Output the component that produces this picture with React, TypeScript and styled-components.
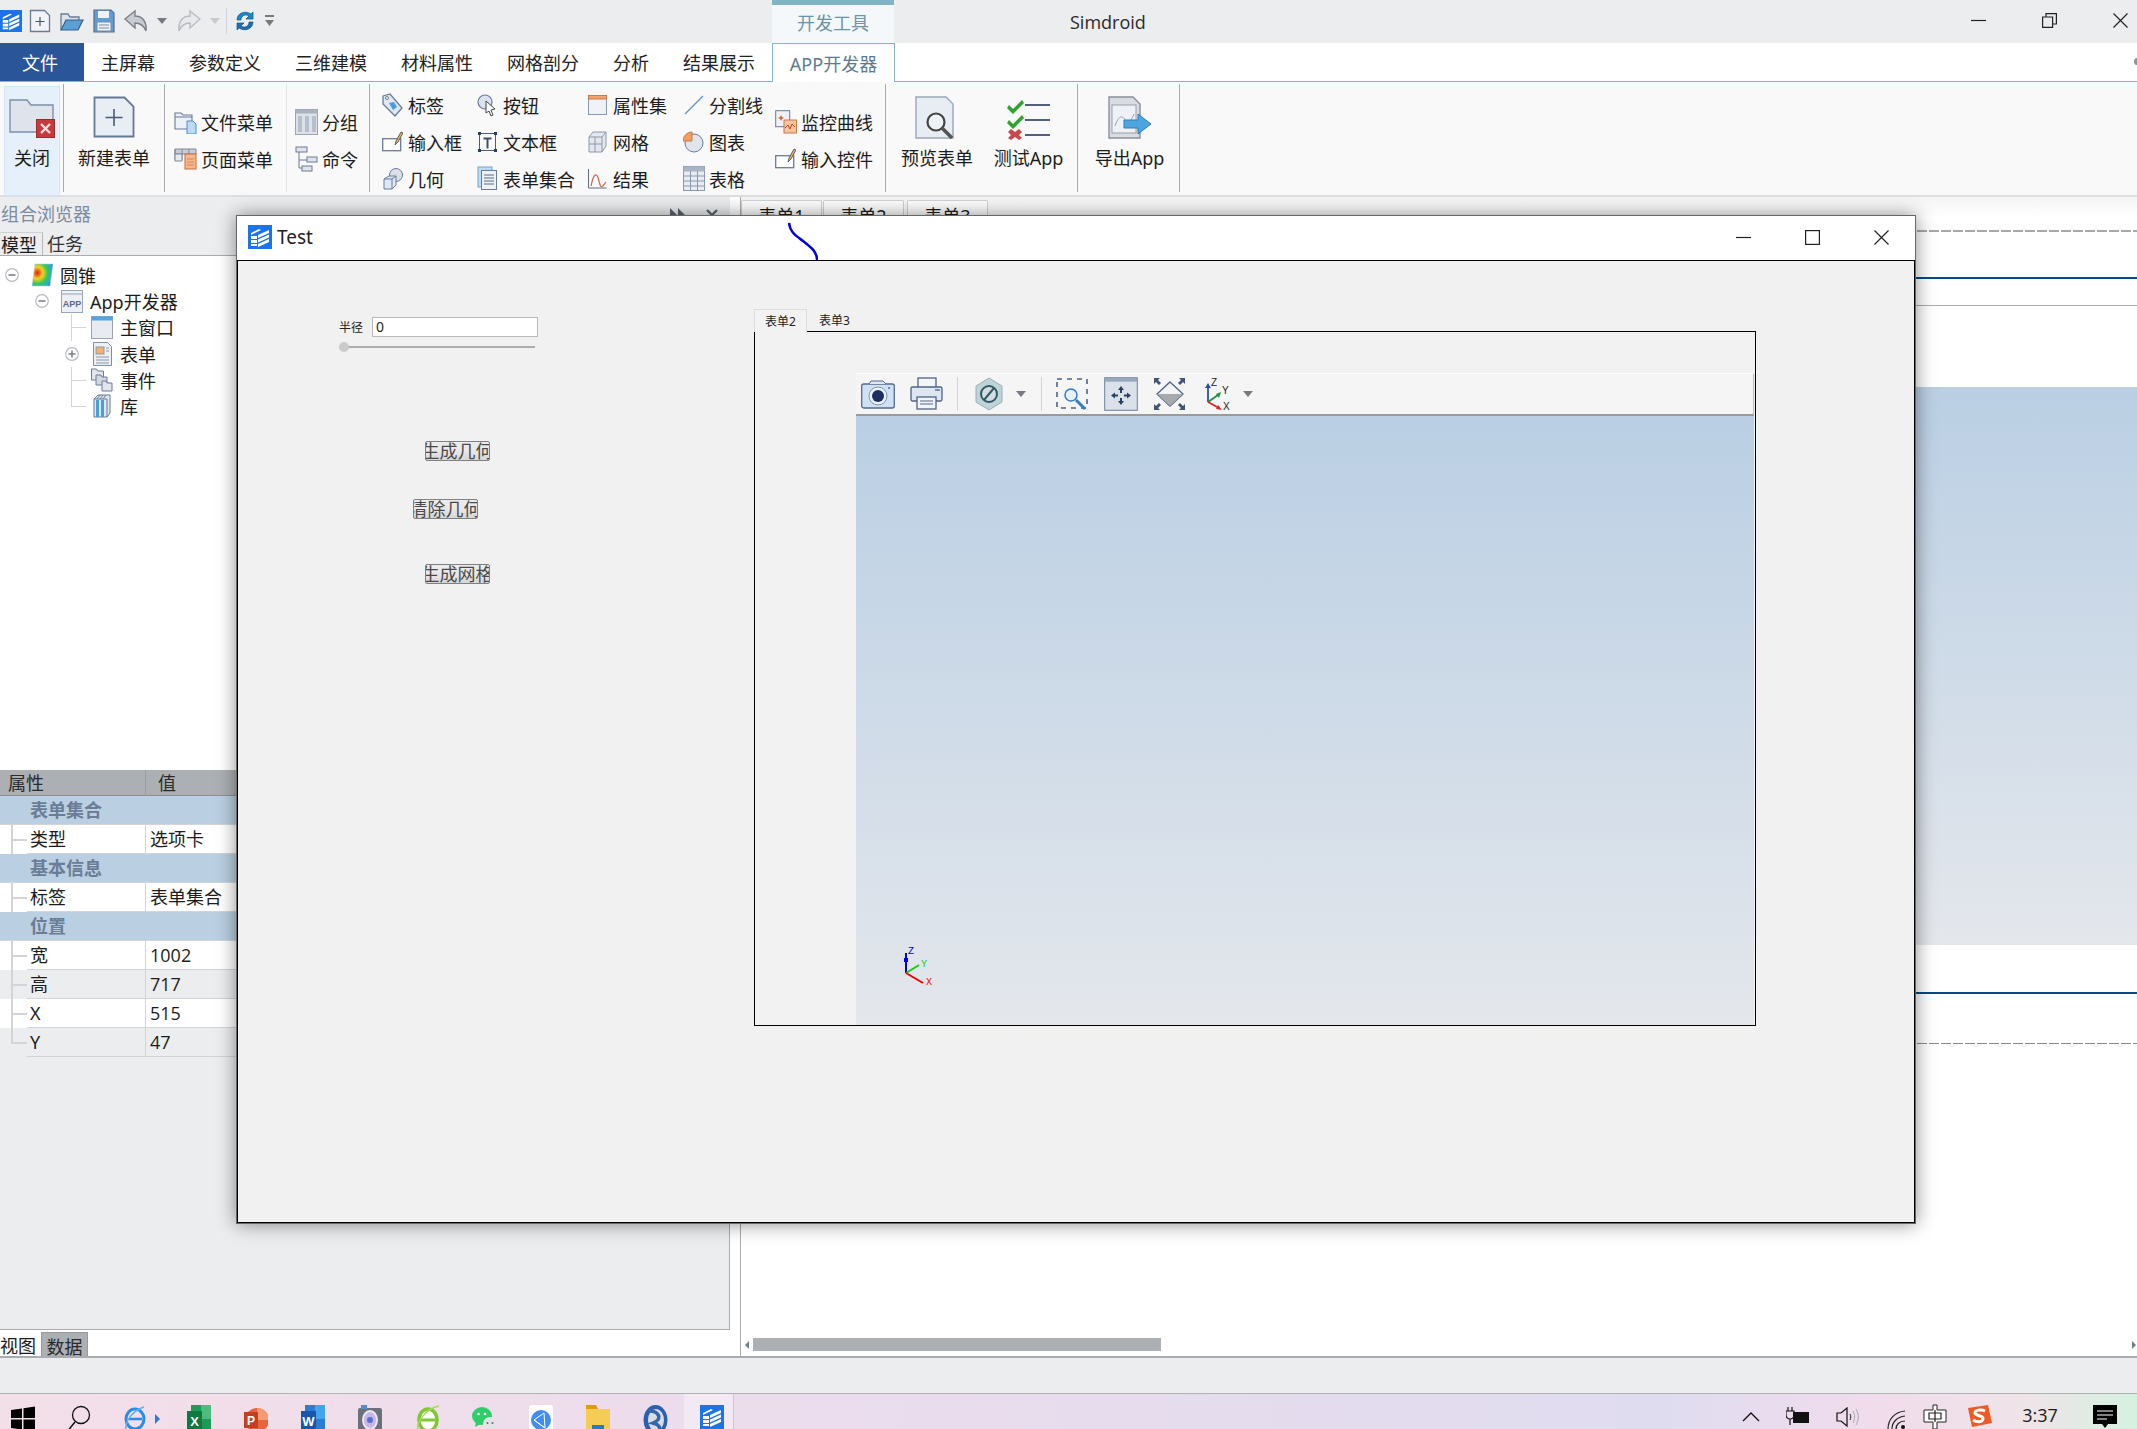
import React from "react";
import styled, { createGlobalStyle } from "styled-components";

const Global = createGlobalStyle`
  html, body { margin: 0; padding: 0; background: #fff; overflow: hidden; }
  body { font-family: "Noto Sans", "Noto Sans CJK SC", sans-serif; color: #1c1c1c; }
  * { box-sizing: border-box; }
`;

const Page = styled.div`
  position: relative; width: 2137px; height: 1429px; overflow: hidden;
  display: flex; flex-direction: column; background: #fff;
`;

/* ---------- icons ---------- */
const S = ({ w, h = w, vb, children }: { w: number; h?: number; vb?: string; children: React.ReactNode }) => (
  <svg width={w} height={h} viewBox={vb || `0 0 ${w} ${h}`} style={{ display: "block", flex: "none" }}>{children}</svg>
);
const ink = "#6a7b96";

const Logo = ({ s = 24 }: { s?: number }) => (
  <S w={s} vb="0 0 24 24">
    <rect width="24" height="24" fill="#1b74e8" />
    <g fill="#fff">
      <path d="M3 8l8-4 2 1-10 5zM3 11h6v3H3zM3 15h6v3H3zM3 19h6v2H3z" />
      <path d="M10 10l11-5v3l-11 5zM10 14.5l11-5v3l-11 5zM10 19l11-5v3l-11 5z" />
    </g>
  </S>
);
const DocPlus = () => (
  <S w={22} h={24}>
    <path d="M1.5 1.5h14l5 5v16h-19z" fill="#f0f3f8" stroke={ink} strokeWidth="1.3" />
    <path d="M11 8v9M6.5 12.5h9" stroke="#46536b" strokeWidth="1.2" />
  </S>
);
const OpenFolder = () => (
  <S w={25} h={24}>
    <path d="M2 21V5h7l2 3h9v4" fill="#dbe3ee" stroke={ink} strokeWidth="1.3" />
    <path d="M2 21l5-10h17l-5 10z" fill="#5c9fd4" stroke="#35608c" strokeWidth="1.2" />
  </S>
);
const Save = () => (
  <S w={22} h={24}>
    <path d="M1 1h17l3 3v19H1z" fill="#5f9fd6" stroke="#5a6d8a" strokeWidth="1.2" />
    <rect x="5" y="2" width="11" height="7" fill="#eef3f9" />
    <rect x="4" y="13" width="14" height="9" fill="#eef1f6" stroke="#7a8aa3" />
    <path d="M6 16h10M6 19h10" stroke="#7a8aa3" />
  </S>
);
const Undo = ({ faded, flip }: { faded?: boolean; flip?: boolean }) => (
  <S w={24} h={24}>
    <path
      d="M1 10L11 2v5c7 0 12 5 11 15-2-5-5-8-11-8v5z"
      fill={faded ? "#e8e9ec" : "#c8ccd2"} stroke={faded ? "#b8bcc2" : "#7b8087"} strokeWidth="1.4"
      transform={flip ? "matrix(-1 0 0 1 24 0)" : undefined}
    />
  </S>
);
const Caret = ({ c = "#767a80", w = 10, h = 6 }: { c?: string; w?: number; h?: number }) => (
  <S w={w} h={h}><path d={`M0 0h${w}L${w / 2} ${h}z`} fill={c} /></S>
);
const Refresh = () => (
  <S w={20} h={24}>
    <path d="M2 11C2 4 10 1 16 5l2-2v7h-7l3-3c-3-2-8-1-8 4z" fill="#1d88c9" stroke="#13587e" strokeWidth=".7" />
    <path d="M18 13c0 7-8 10-14 6l-2 2v-7h7l-3 3c3 2 8 1 8-4z" fill="#1d6fb5" stroke="#13587e" strokeWidth=".7" />
  </S>
);
const SmallDrop = () => (
  <S w={9} h={12}><path d="M0 0h9v2H0zM0 5h9L4.5 11z" fill="#76797e" /></S>
);
const WinMin = () => <S w={15}><path d="M0 7.5h15" stroke="#222" strokeWidth="1.2" /></S>;
const WinRestore = () => (
  <S w={15}><path d="M.6 4h10v10.4H.6zM4 4V.6h10.4V11H11" fill="none" stroke="#222" strokeWidth="1.2" /></S>
);
const WinClose = () => <S w={15}><path d="M.5.5l14 14M14.5.5l-14 14" stroke="#222" strokeWidth="1.2" /></S>;
const DlgMax = () => <S w={15}><rect x=".6" y=".6" width="13.8" height="13.8" fill="none" stroke="#222" strokeWidth="1.2" /></S>;
const PinArrows = () => <S w={16} h={14}><path d="M0 0l7 7-7 7zM8 0l7 7-7 7z" fill="#5c6470" /></S>;
const PanelX = () => <S w={14}><path d="M2 2l10 10M12 2L2 12" stroke="#5c6470" strokeWidth="2.4" /></S>;

const CloseFolder = () => (
  <S w={46} h={42}>
    <path d="M1 4h17l4 5h22v27H1z" fill="#dfe4ec" stroke="#7e8ea6" strokeWidth="1.4" />
    <rect x="27.5" y="23.5" width="18" height="18" fill="#c53a3d" stroke="#9a2b2e" />
    <path d="M32 28l9 9M41 28l-9 9" stroke="#f6dede" strokeWidth="2.4" />
  </S>
);
const NewForm = () => (
  <S w={42} h={42}>
    <path d="M1.5 1.5h30l9 9v30h-39z" fill="#e9edf4" stroke="#66789a" strokeWidth="1.8" />
    <path d="M21 13v17M12.5 21.5h17" stroke="#495a78" strokeWidth="1.6" />
  </S>
);
const PreviewForm = () => (
  <S w={44} h={44} >
    <path d="M1 1h30l7 7v34H1z" fill="#e8ecf3" stroke="#9aa6b8" strokeWidth="1.4" />
    <circle cx="21" cy="26" r="8.5" fill="#eef2f6" stroke="#444" strokeWidth="2.2" />
    <path d="M27 32l10 10" stroke="#555" strokeWidth="3.6" />
  </S>
);
const CheckList = () => (
  <S w={44} h={44}>
    <path d="M2 9l4 4 9-9 2 3-11 11L0 12z" fill="#2ea32e" />
    <path d="M2 24l4 4 9-9 2 3-11 11-6-6z" fill="#2ea32e" />
    <path d="M4 33l4 3 4-3 3 3-3 3 3 3-3 2-4-3-4 3-3-2 3-3-3-3z" fill="#c84a4a" />
    <path d="M18 9h25M18 24h25M18 39h25" stroke="#4e607e" strokeWidth="2" />
  </S>
);
const ExportApp = () => (
  <S w={44} h={44}>
    <path d="M1 1h24l7 7v34H1z" fill="#d9dde3" stroke="#8b8f96" strokeWidth="1.4" />
    <rect x="4" y="9" width="24" height="28" fill="#eef1f5" stroke="#9aa0aa" />
    <path d="M7 30c4-12 8-10 10-6s6 2 9-6" stroke="#9aa3b2" fill="none" />
    <path d="M16 24h14v-6l13 10-13 10v-6H16z" fill="#4ea4dd" stroke="#2f7fb6" />
  </S>
);

const Tag = () => (
  <S w={21} h={24}>
    <path d="M1 3l7-2 12 14-7 8L1 11z" fill="#dfe7f1" stroke={ink} strokeWidth="1.3" />
    <path d="M7 10l5-1 3 5-4 3z" fill="#4d9bdb" />
    <circle cx="5" cy="5" r="1.5" fill="#fff" stroke={ink} />
  </S>
);
const ButtonIc = () => (
  <S w={21} h={24}>
    <circle cx="8" cy="9" r="7" fill="#d9e2ee" stroke={ink} strokeWidth="1.2" />
    <path d="M9 8l9 8-4 1 2 5-2 1-2-5-3 2z" fill="#fff" stroke="#444" />
  </S>
);
const InputIc = () => (
  <S w={21} h={24}>
    <rect x=".7" y="8.7" width="18" height="12" fill="#fff" stroke={ink} strokeWidth="1.3" />
    <path d="M13 15l1-4 5-9 2 1-5 9z" fill="#f2a64b" stroke="#4b5a70" strokeWidth=".9" />
  </S>
);
const TextBox = () => (
  <S w={21} h={24}>
    <rect x="2.5" y="3.5" width="16" height="17" fill="none" stroke="#4a5d80" />
    <path d="M1 2h3v3H1zM17 2h3v3h-3zM1 19h3v3H1zM17 19h3v3h-3z" fill="#2c3e5e" />
    <path d="M6.5 7.5h8v2h-3v9h-2v-9h-3z" fill="#3e4f6b" />
  </S>
);
const Geometry = () => (
  <S w={21} h={24}>
    <circle cx="14" cy="8" r="6.5" fill="#dadfe8" stroke={ink} />
    <path d="M2 12l5-3h7v9l-4 4H2z" fill="#dce9f6" stroke={ink} />
    <path d="M2 12h8v10M10 12l4-3" fill="none" stroke={ink} />
  </S>
);
const FileMenu = () => (
  <S w={23} h={24}>
    <path d="M1 3h6l2 2h9v14H1z" fill="#eef1f6" stroke={ink} strokeWidth="1.1" />
    <path d="M1 7h17" stroke={ink} />
    <path d="M13 11h6l3 3v10h-9z" fill="#bcdcf5" stroke="#4c8fc5" />
  </S>
);
const PageMenu = () => (
  <S w={23} h={24}>
    <path d="M1 2h21v5H1z" fill="#c9ced7" stroke="#7e8795" />
    <path d="M8 2v11H1V2M15 2v5" fill="none" stroke="#7e8795" />
    <path d="M1 7h7v7H1z" fill="#e6e9ee" stroke="#7e8795" />
    <rect x="11" y="7" width="11" height="15" fill="#f7b98c" stroke="#c96a3c" />
    <path d="M13 12h7M13 15h7M13 18h7" stroke="#d88658" />
  </S>
);
const GroupIc = () => (
  <S w={23} h={26}>
    <rect x=".5" y=".5" width="22" height="25" fill="#dde1e8" stroke="#98a2b2" />
    <rect x=".5" y=".5" width="22" height="4" fill="#a9b2c0" />
    <path d="M3 7h4v16H3zM10 7h4v16h-4zM17 7h4v16h-4z" fill="#b7bfcc" />
  </S>
);
const CommandIc = () => (
  <S w={23} h={26}>
    <path d="M4 6v16h8M4 14h8" fill="none" stroke={ink} />
    <rect x="1" y="1" width="11" height="5" fill="#dfe4ec" stroke={ink} />
    <rect x="12" y="11" width="10" height="5" fill="#dfe4ec" stroke={ink} />
    <rect x="7" y="20" width="10" height="5" fill="#dfe4ec" stroke={ink} />
  </S>
);
const FormSet = () => (
  <S w={21} h={25}>
    <rect x="1" y="1" width="14" height="20" fill="#bcdcf5" stroke="#6ea6d6" />
    <rect x="4.5" y="4.5" width="15" height="19" fill="#eef1f6" stroke={ink} />
    <path d="M7 9h10M7 12h10M7 15h10M7 18h10" stroke="#5c6c85" />
  </S>
);
const PropSet = () => (
  <S w={21} h={24}>
    <rect x="1.5" y="2.5" width="18" height="19" fill="#eff2f6" stroke="#8a98ad" />
    <rect x="1.5" y="2.5" width="18" height="3.5" fill="#f4a468" stroke="#c9794a" />
  </S>
);
const MeshIc = () => (
  <S w={21} h={24}>
    <path d="M2 7l4-5h13v14l-4 6H2z" fill="#e4e8ee" stroke="#8a98ad" />
    <path d="M2 7h13v15M15 7l4-5M2 14h13M8 7v15" fill="none" stroke="#8a98ad" />
  </S>
);
const ResultIc = () => (
  <S w={21} h={24}>
    <path d="M1.5 2v19h18" fill="none" stroke="#5c6c85" />
    <path d="M4 19c3-14 6-14 8-5s3 6 7 1" fill="none" stroke="#d0654a" strokeWidth="1.2" />
  </S>
);
const LineIc = () => <S w={21} h={24}><path d="M2 21L20 3" stroke="#5b93c8" strokeWidth="1.3" /></S>;
const PieIc = () => (
  <S w={21} h={24}>
    <circle cx="11" cy="13" r="9" fill="#dfe5ee" stroke={ink} />
    <path d="M9 2v9H0C0 6 4 2 9 2z" fill="#f2a062" stroke="#c9794a" />
  </S>
);
const TableIc = () => (
  <S w={22} h={25}>
    <rect x=".5" y=".5" width="21" height="24" fill="#e9edf3" stroke="#8a98ad" />
    <rect x=".5" y=".5" width="21" height="5" fill="#a9b4c4" />
    <path d="M1 10h20M1 15h20M1 20h20M7.5 5v19M14.5 5v19" stroke="#8a98ad" />
  </S>
);
const MonitorIc = () => (
  <S w={22} h={24}>
    <rect x=".7" y=".7" width="14" height="16" fill="#eef1f6" stroke={ink} />
    <path d="M6 5l1 2 2 1-2 1-1 2-1-2-2-1 2-1z" fill="#d06a3c" />
    <rect x="9" y="10" width="12.5" height="13" fill="#f8c59b" stroke="#c9794a" />
    <path d="M10 18l3-3 2 4 2-5 3 3" fill="none" stroke="#c0442a" />
  </S>
);

const ToggleCircle = ({ open }: { open: boolean }) => (
  <S w={14}>
    <circle cx="7" cy="7" r="6.3" fill="#fff" stroke="#b7babf" strokeWidth="1.2" />
    <path d={open ? "M3.5 7h7" : "M3.5 7h7M7 3.5v7"} stroke="#7d8288" strokeWidth="1.6" />
  </S>
);
const ConeIc = () => (
  <S w={22} h={24}>
    <defs>
      <radialGradient id="cone" cx=".25" cy=".4" r=".9">
        <stop offset="0" stopColor="#e21b1b" />
        <stop offset=".3" stopColor="#f6d21c" />
        <stop offset=".55" stopColor="#34c75a" />
        <stop offset=".8" stopColor="#25a8e0" />
        <stop offset="1" stopColor="#2350c8" />
      </radialGradient>
    </defs>
    <path d="M4 1h18l-3 22H1z" fill="url(#cone)" stroke="#c6cad0" strokeWidth=".6" />
  </S>
);
const AppIc = () => (
  <S w={22} h={23}>
    <rect x=".5" y=".5" width="21" height="22" fill="#eceff4" stroke="#9aa6b8" />
    <path d="M1 4h20" stroke="#9aa6b8" />
    <text x="11" y="17" textAnchor="middle" fontSize="9" fontWeight="700" fill="#5b6b85" fontFamily="Liberation Sans, sans-serif">APP</text>
  </S>
);
const WindowIc = () => (
  <S w={22} h={23}>
    <rect x=".5" y=".5" width="21" height="22" fill="#e8ebf1" stroke="#98a4b6" />
    <rect x=".5" y=".5" width="21" height="4" fill="#51a6e0" />
  </S>
);
const FormIc = () => (
  <S w={19} h={24}>
    <path d="M.5.5h14l4 4v19H.5z" fill="#edf0f5" stroke="#7f8fa8" />
    <rect x="3" y="5" width="8" height="7" fill="#f5b274" stroke="#8d97a8" />
    <path d="M13 6h3M13 9h3M3 15h13M3 18h13M3 21h13" stroke="#8a96a8" />
  </S>
);
const EventIc = () => (
  <S w={22} h={24}>
    <path d="M.5 1h5l1 2h6v9H.5z" fill="#e3e6ec" stroke={ink} />
    <path d="M5 7h5l1 2h5v8H5z" fill="#d3d8e0" stroke={ink} />
    <path d="M11 13h4l1 2h5v8H11z" fill="#e3e6ec" stroke={ink} />
  </S>
);
const LibraryIc = () => (
  <S w={18} h={24}>
    <path d="M1 5l4-4h12v18l-3 4H1z" fill="#dfe8f2" stroke={ink} />
    <path d="M1 5h13v18" fill="none" stroke={ink} />
    <path d="M3 6h3v17H3zM8 6h3v17H8z" fill="#4ba0dc" />
    <path d="M7 1L4 5M10 1L7 5M13 1l-3 4" stroke={ink} />
  </S>
);

const Camera = () => (
  <S w={34} h={32}>
    <rect x=".7" y="6" width="32.6" height="24" rx="2" fill="#cfe1f4" stroke="#55698c" strokeWidth="1.3" />
    <path d="M8 6l2-3h12l3 3" fill="#dfe7f2" stroke="#55698c" />
    <circle cx="17" cy="18" r="9" fill="#eaf1f9" stroke="#7f95b5" />
    <circle cx="17" cy="18" r="6" fill="#1c2f62" />
    <circle cx="28" cy="10" r="1" fill="#55698c" />
  </S>
);
const Printer = () => (
  <S w={33} h={34}>
    <rect x="8" y="1" width="18" height="11" fill="#f2f5f9" stroke="#4f6384" strokeWidth="1.3" />
    <rect x="1" y="10" width="31" height="14" rx="1.5" fill="#dde6f1" stroke="#4f6384" strokeWidth="1.3" />
    <path d="M25 13h5" stroke="#7f8ea6" strokeWidth="2" />
    <rect x="7" y="20" width="19" height="12" fill="#f2f5f9" stroke="#4f6384" strokeWidth="1.3" />
    <path d="M10 24h13M10 27h13" stroke="#55698c" strokeWidth="1.2" />
  </S>
);
const Hexagon = () => (
  <S w={28} h={34}>
    <path d="M14 1l13 8v16l-13 8-13-8V9z" fill="#bfd4d9" stroke="#9ab0b8" />
    <circle cx="14" cy="17" r="8" fill="#d5dde2" stroke="#2f5a68" strokeWidth="2" />
    <path d="M9 23l10-12" stroke="#2f5a68" strokeWidth="2" />
  </S>
);
const ZoomBox = () => (
  <S w={33} h={34}>
    <rect x="1" y="2" width="30" height="29" fill="none" stroke="#4f6384" strokeWidth="1.6" strokeDasharray="5 5" />
    <circle cx="15" cy="18" r="6" fill="#e9f1f8" stroke="#2f7fc1" strokeWidth="1.5" />
    <path d="M20 23l9 9" stroke="#2f7fc1" strokeWidth="3" />
  </S>
);
const PanIc = () => (
  <S w={34} h={34}>
    <rect x=".7" y=".7" width="32.6" height="32.6" fill="#dbe1ea" stroke="#6d7f9c" />
    <rect x=".7" y=".7" width="32.6" height="4" fill="#9aa8bd" />
    <path d="M17 9l3 4h-2v3h-2v-3h-2zM17 28l3-4h-2v-3h-2v3h-2zM7 18.5l4-3v2h3v2h-3v2zM27 18.5l-4-3v2h-3v2h3v2z" fill="#2c3e5e" />
  </S>
);
const FitIc = () => (
  <S w={33} h={34}>
    <path d="M17 5L30 17 17 29 4 17z" fill="#f2f3f5" stroke="#4f6384" strokeWidth="1.3" />
    <path d="M4 17h26L17 29z" fill="#a6a9ae" />
    <path d="M1 1h6L5 3l3 3-2 2-3-3-2 2zM32 1h-6l2 2-3 3 2 2 3-3 2 2zM1 33h6l-2-2 3-3-2-2-3 3-2-2zM32 33h-6l2-2-3-3 2-2 3 3 2-2z" fill="#40547a" />
  </S>
);
const AxesIc = () => (
  <S w={38} h={34}>
    <path d="M4 25V9" stroke="#2552a8" strokeWidth="1.8" />
    <path d="M4 6l3 5H1z" fill="#2552a8" />
    <path d="M4 25l10-7" stroke="#1f8f44" strokeWidth="1.8" />
    <path d="M17 15l-2 6-3-4z" fill="#1f8f44" />
    <path d="M4 25l11 6" stroke="#d9262a" strokeWidth="1.8" />
    <path d="M18 33l-6-1 2-4z" fill="#d9262a" />
    <g fontFamily="Liberation Sans, sans-serif" fontSize="10" fill="#222">
      <text x="7" y="9">Z</text><text x="18" y="17">Y</text><text x="19" y="33">X</text>
    </g>
  </S>
);

const Windows = () => (
  <S w={24} h={28}>
    <path d="M0 5l11-1.5V13H0zM12.5 3.3L24 1.5V13H12.5zM0 14.5h11v10L0 23zM12.5 14.5H24V27l-11.5-2z" fill="#000" />
  </S>
);
const SearchIc = () => (
  <S w={26} h={28}>
    <circle cx="16" cy="10" r="8.5" fill="none" stroke="#111" strokeWidth="1.3" />
    <path d="M10 17L1 28" stroke="#111" strokeWidth="1.5" />
  </S>
);
const IeIc = () => (
  <S w={40} h={28}>
    <ellipse cx="15" cy="14" rx="9" ry="10" fill="none" stroke="#2a8be8" strokeWidth="3" />
    <path d="M9 14h13" stroke="#2a8be8" strokeWidth="2.5" />
    <path d="M6 26C4 16 14 5 24 2" fill="none" stroke="#5fb0f0" strokeWidth="1.5" />
    <path d="M35 9l5 5-5 5z" fill="#2a78e0" />
  </S>
);
const Office = ({ c1, c2, c3, l }: { c1: string; c2: string; c3: string; l: string }) => (
  <S w={24} h={30}>
    <rect x="4" y="0" width="20" height="28" fill={c2} />
    <rect x="14" y="0" width="10" height="14" fill={c3} />
    <rect x="0" y="6" width="15" height="20" fill={c1} />
    <text x="7.5" y="21" textAnchor="middle" fontSize="13" fontWeight="700" fill="#fff" fontFamily="Liberation Sans, sans-serif">{l}</text>
  </S>
);
const PptIc = () => (
  <S w={24} h={30}>
    <circle cx="13" cy="15" r="12" fill="#e8653c" />
    <path d="M13 3a12 12 0 0 1 12 12H13z" fill="#f59a73" />
    <rect x="0" y="7" width="14" height="16" fill="#c2401f" />
    <text x="7" y="20" textAnchor="middle" fontSize="12" fontWeight="700" fill="#fff" fontFamily="Liberation Sans, sans-serif">P</text>
  </S>
);
const CamTask = () => (
  <S w={24} h={30}>
    <rect x="0" y="3" width="24" height="25" rx="2" fill="#6c7078" />
    <rect x="3" y="0" width="6" height="4" fill="#4e8fd0" />
    <ellipse cx="12" cy="15" rx="7" ry="9" fill="#c8b5e8" stroke="#e8e8f0" strokeWidth="2" />
    <circle cx="12" cy="15" r="3" fill="#5a6fd0" />
  </S>
);
const GreenIe = () => (
  <S w={25} h={30}>
    <ellipse cx="13" cy="15" rx="9" ry="11" fill="#fff" stroke="#7fc832" strokeWidth="3.5" />
    <path d="M6 15h14" stroke="#7fc832" strokeWidth="3" />
    <path d="M3 28C0 17 12 3 24 1" fill="none" stroke="#a3d95f" strokeWidth="1.5" />
  </S>
);
const WeChat = () => (
  <S w={25} h={28}>
    <ellipse cx="10" cy="11" rx="10" ry="9" fill="#2ecf6a" />
    <path d="M4 17l-1 5 6-3z" fill="#2ecf6a" />
    <circle cx="6.5" cy="9" r="1.3" fill="#fff" /><circle cx="13" cy="9" r="1.3" fill="#fff" />
    <ellipse cx="18" cy="19" rx="7" ry="7" fill="#e4e4e6" />
    <circle cx="15.5" cy="18" r="1" fill="#666" /><circle cx="20.5" cy="18" r="1" fill="#666" />
  </S>
);
const BlueNet = () => (
  <S w={24} h={30}>
    <rect x="0" y="0" width="24" height="30" rx="3" fill="#fff" />
    <circle cx="12" cy="15" r="10" fill="#3f8ef0" />
    <path d="M5 15l10-7 1 15zM5 15l11 8" fill="none" stroke="#fff" />
  </S>
);
const FolderTask = () => (
  <S w={24} h={30}>
    <path d="M0 0h10l2 4H0z" fill="#e09a14" />
    <rect x="0" y="4" width="24" height="24" fill="#f5cd55" />
    <rect x="6" y="20" width="12" height="10" fill="#2a78c8" />
    <rect x="10" y="24" width="4" height="6" fill="#f5cd55" />
  </S>
);
const Swirl = () => (
  <S w={25} h={32}>
    <ellipse cx="12.5" cy="15" rx="12" ry="15" fill="#2c5fb0" />
    <ellipse cx="13" cy="15" rx="8" ry="11" fill="#d8dce4" />
    <path d="M6 6c10 0 14 8 4 12 8 2 9 8 4 12" fill="none" stroke="#36a" strokeWidth="3.5" />
  </S>
);
const Chevron = () => <S w={18} h={10}><path d="M1 9l8-8 8 8" fill="none" stroke="#111" strokeWidth="1.3" /></S>;
const Battery = () => (
  <S w={24} h={20}>
    <path d="M2 0v4M6 0v4M0 4h8v4a4 4 0 0 1-8 0zM4 12v6" fill="none" stroke="#111" strokeWidth="1.2" />
    <rect x="7" y="5" width="16" height="11" fill="#111" />
  </S>
);
const Speaker = () => (
  <S w={23} h={20}>
    <path d="M1 6h4l6-5v18l-6-5H1z" fill="none" stroke="#111" strokeWidth="1.2" />
    <path d="M14 7c1 2 1 4 0 6" fill="none" stroke="#222" />
    <path d="M17 4c2 4 2 8 0 12M20 2c3 5 3 11 0 16" fill="none" stroke="#aaa" />
  </S>
);
const Wifi = () => (
  <S w={19} h={20}>
    <path d="M1 20C1 10 8 3 18 2M5 20c0-7 5-12 13-13M9 20c0-4 3-8 9-8" fill="none" stroke="#222" strokeWidth="1.2" />
    <circle cx="16" cy="18" r="2" fill="#111" />
  </S>
);
const ZhongIme = () => (
  <S w={24} h={26}>
    <path d="M10 1h4v5h9v12h-9v7h-4v-7H1V6h9z" fill="#fff" stroke="#222" strokeWidth="1" strokeLinejoin="round" />
    <path d="M6 9h12v6H6zM12 6v12" fill="none" stroke="#222" strokeWidth="1.2" />
  </S>
);
const Sogou = () => (
  <S w={25} h={24}>
    <path d="M1 4l20-3 4 18-20 4z" fill="#ee5a24" />
    <path d="M18 7c-4-2-10-1-10 2s9 2 8 6-7 3-10 1" fill="none" stroke="#fff" strokeWidth="3" />
  </S>
);
const Notify = () => (
  <S w={24} h={26}>
    <path d="M0 0h24v19h-9l-3 4-3-4H0z" fill="#000" />
    <path d="M4 6h16M4 10h16M4 14h10" stroke="#fff" />
  </S>
);

/* ---------- title bar ---------- */
const TitleBar = styled.header`
  height: 43px; flex: none; display: flex; align-items: center; background: #ecedef;
`;
const Quick = styled.div`
  width: 772px; height: 100%; display: flex; align-items: center; padding-bottom: 2px;
`;
const QuickSlot = styled.span<{ $l: number }>`
  margin-left: ${p => p.$l}px; display: block;
`;
const QuickSep = styled.span`
  width: 1px; height: 26px; background: #cfd2d6; margin-left: 6px;
`;
const ContextTab = styled.div`
  width: 122px; height: 100%; background: #f4f8fb; border-top: 5px solid #7fb5c3; padding-bottom: 5px;
  display: flex; align-items: center; justify-content: center; font-size: 18px; color: #6f93a6;
`;
const AppTitle = styled.div`
  margin-left: 176px; font-size: 18px; color: #2a2a2a; font-family: "Open Sans", "Noto Sans", sans-serif;
`;
const WinControls = styled.div`
  margin-left: auto; display: flex; gap: 56px; padding-right: 9px; padding-bottom: 3px;
`;

/* ---------- ribbon tabs ---------- */
const TabRow = styled.nav`
  position: relative; height: 39px; flex: none; display: flex; background: #fff; border-bottom: 1px solid #85b5c0;
`;
const FileTab = styled.div`
  width: 84px; height: 38px; background: #2a5598; color: #fff; font-size: 18px; padding-right: 4px;
  display: flex; align-items: center; justify-content: center;
`;
const MainTab = styled.div<{ $active?: boolean }>`
  height: ${p => (p.$active ? "39px" : "38px")}; padding: 0 17px; font-size: 18px; line-height: 40px;
  color: ${p => (p.$active ? "#5d7a90" : "#222")}; background: #fff; white-space: nowrap;
  ${p => (p.$active ? "border: 1px solid #85b5c0; border-bottom: none; width: 123px; padding: 0; text-align: center;" : "")}
`;
const CollapseDot = styled.span`
  position: absolute; right: -3px; top: 15px; width: 6px; height: 7px; border-radius: 50%; background: #8a929c;
`;

/* ---------- ribbon ---------- */
const Ribbon = styled.section`
  height: 115px; flex: none; display: flex; padding-top: 2px; background: #f9f9f9; border-bottom: 2px solid #dedfe1;
  align-items: flex-start;
`;
const Group = styled.div<{ $w: number; $pl?: number; $soft?: boolean }>`
  width: ${p => p.$w}px; height: 108px; flex: none; display: flex; padding-left: ${p => p.$pl || 0}px;
  border-right: 1px solid ${p => (p.$soft ? "#e4e5e7" : "#a9abae")};
`;
const CloseButton = styled.div`
  width: 56px; height: 110px; margin-top: 2px; background: #e6f0fb; border: 1px solid #d6e5f6;
  display: flex; flex-direction: column; align-items: center; padding-top: 9px; margin-bottom: -4px;
`;
const BigButton = styled.div<{ $w: number; $ml?: number }>`
  width: ${p => p.$w}px; margin-left: ${p => p.$ml || 0}px; display: flex; flex-direction: column; align-items: center;
  padding-top: 12px;
`;
const BigIcon = styled.div`
  height: 44px; display: flex; align-items: flex-start; justify-content: center;
`;
const BigLabel = styled.div`
  margin-top: 6px; font-size: 18px; line-height: 24px; white-space: nowrap;
`;
const SmallColumn = styled.div<{ $w: number; $pt?: number }>`
  width: ${p => p.$w}px; padding-top: ${p => p.$pt ?? 7}px; flex: none; display: flex; flex-direction: column; justify-content: center;
  height: 108px;
`;
const SmallItem = styled.div`
  height: 37px; flex: none; display: flex; align-items: center; gap: 5px; font-size: 18px; white-space: nowrap;
`;
const SmallIcon = styled.span`
  width: 21px; display: flex; justify-content: center;
`;

const Small = ({ icon, t }: { icon: React.ReactNode; t: string }) => (
  <SmallItem><SmallIcon>{icon}</SmallIcon>{t}</SmallItem>
);

/* ---------- work area ---------- */
const Work = styled.main`
  height: 1159px; flex: none; display: flex; background: #fff;
`;
const LeftPanel = styled.aside`
  width: 740px; flex: none; display: flex; flex-direction: column;
`;
const BrowserTitle = styled.div`
  height: 35px; flex: none; width: 730px; background: #ecedef; display: flex; align-items: center; justify-content: space-between;
  padding: 0 11px 4px 1px; font-size: 18px; color: #7d8ba0;
`;
const PanelActions = styled.div`
  display: flex; gap: 19px; align-items: center; padding-top: 4px;
`;
const BrowserTabs = styled.div`
  height: 24px; flex: none; width: 730px; background: #ecedef; border-bottom: 1px solid #aaa; display: flex; font-size: 18px;
`;
const BrowserTab = styled.div<{ $on?: boolean }>`
  padding: 0 5px 0 1px; line-height: 24px; width: ${p => (p.$on ? "43px" : "auto")};
  ${p => (p.$on ? "border-right: 1px solid #b8b8b8; border-top: 1px solid #d0d0d0;" : "color: #333; margin-left: 3px;")}
`;
const Tree = styled.div`
  height: 514px; flex: none; padding-top: 6px; width: 730px;
`;
const TreeRow = styled.div<{ $level: number }>`
  height: 26.2px; display: flex; align-items: center; padding-left: ${p => 4 + p.$level * 30}px; font-size: 18px;
`;
const TreeSlot = styled.span`
  width: 16px; display: flex; justify-content: center; flex: none;
`;
const TreeBranch = styled.span<{ $top?: boolean; $bottom?: boolean }>`
  position: relative; width: 16px; height: 26.2px; flex: none;
  &::before {
    content: ""; position: absolute; left: 7px; width: 1px; background: #d2d4d8;
    top: ${p => (p.$top ? "0" : "-2px")}; bottom: ${p => (p.$bottom ? "12px" : "0")};
  }
  &::after {
    content: ""; position: absolute; left: 7px; width: 15px; top: 13px; height: 1px; background: #d2d4d8;
  }
`;
const TreeIcon = styled.span<{ $gap: number }>`
  margin-left: ${p => p.$gap}px; margin-right: 7px; width: 22px; display: flex; justify-content: center; flex: none;
`;

const PropHead = styled.div`
  height: 26px; flex: none; width: 730px; background: #acb0b4; border-bottom: 1px solid #8d9094;
  display: grid; grid-template-columns: 146px 1fr; font-size: 18px; line-height: 27px; color: #2a2a2a;
`;
const PropHeadCell = styled.div<{ $pl: number }>`
  padding-left: ${p => p.$pl}px; border-right: 1px solid #999ca0;
`;
const PropGroup = styled.div`
  height: 29px; flex: none; width: 730px; background: #bacfe1; padding-left: 30px; border-bottom: 1px solid #d2d6da;
  font-size: 18px; font-weight: 700; line-height: 29px; color: #6b7d96;
`;
const PropRow = styled.div<{ $alt?: boolean }>`
  height: 29px; flex: none; width: 730px; display: grid; grid-template-columns: 27px 119px 1fr;
  background: ${p => (p.$alt ? "#ecedef" : "#fff")}; font-size: 18px; line-height: 28px;
`;
const PropGutter = styled.span<{ $last?: boolean }>`
  position: relative;
  &::before {
    content: ""; position: absolute; left: 11px; top: 0; width: 1.5px; background: #d2d4d8;
    bottom: ${p => (p.$last ? "14px" : "0")};
  }
  &::after {
    content: ""; position: absolute; left: 11px; right: 0; top: 14px; height: 1.5px; background: #d2d4d8;
  }
`;
const PropName = styled.span`
  padding-left: 3px; border-right: 1px solid #d2d4d8; border-bottom: 1px solid #d2d4d8;
`;
const PropValue = styled.span`
  padding-left: 4px; border-bottom: 1px solid #d2d4d8; font-family: "Open Sans", "Noto Sans CJK SC", sans-serif;
`;
const PanelFill = styled.div`
  flex: 1; width: 730px; background: #ecedef; border-right: 1px solid #aaa; border-bottom: 1px solid #aaa;
`;
const ViewTabs = styled.div`
  height: 26px; flex: none; display: flex; gap: 5px; font-size: 18px; width: 730px; align-items: flex-end;
`;
const ViewTab = styled.div<{ $on?: boolean }>`
  width: ${p => (p.$on ? "47px" : "36px")}; height: 24px; line-height: 29px; text-align: center; overflow: hidden;
  ${p => (p.$on ? "background: #acb0b4; border: 1px solid #999; border-bottom: none; color: #2a2a2a;" : "")}
`;

const RightPanel = styled.div`
  flex: 1; display: flex; flex-direction: column; border-left: 1px solid #aaa; min-width: 0;
`;
const DocTabs = styled.div`
  height: 33px; flex: none; display: flex; gap: 1px; padding-top: 3px; background: linear-gradient(#f5f5f6, #fff 60%);
`;
const DocTab = styled.div<{ $gap?: number }>`
  width: 81px; height: 30px; margin-left: ${p => p.$gap || 0}px; background: #fff; border: 1px solid #cfd1d4; border-bottom: none;
  border-radius: 2px 2px 0 0; text-align: center; font-size: 18px; line-height: 30px;
`;
const Canvas = styled.div`
  flex: 1; position: relative; overflow: hidden; display: flex; flex-direction: column;
`;
const Rule = styled.div<{ $top: number; $h?: number; $c: string; $dash?: boolean }>`
  flex: none; margin-top: ${p => p.$top}px; height: ${p => p.$h || 1}px;
  background: ${p => p.$dash
    ? `repeating-linear-gradient(90deg, ${p.$c} 0 10px, #fff 10px 12px)`
    : p.$c};
`;
const Band = styled.div`
  flex: none; margin-top: 81px; height: 558px; background: linear-gradient(#bacfe4, #e4e7ec);
`;
const Scrollbar = styled.div`
  height: 20px; flex: none; margin-top: auto; display: flex; align-items: center; padding: 0 0 3px 4px; position: relative;
`;
const ScrollArrow = styled.span<{ $right?: boolean }>`
  width: 0; height: 0; border-top: 4px solid transparent; border-bottom: 4px solid transparent;
  ${p => (p.$right ? "border-left: 4px solid #6f7f86; margin-left: auto; margin-right: 1px;" : "border-right: 4px solid #6f7f86;")}
`;
const ScrollThumb = styled.div`
  width: 408px; height: 13px; background: #acb0b4; margin-left: 4px;
`;

const StatusBar = styled.div`
  height: 38px; flex: none; background: #ecedef; border-top: 2px solid #a9abae; border-bottom: 1px solid #b0b2b4;
`;

/* ---------- taskbar ---------- */
const Taskbar = styled.footer`
  flex: 1; display: flex; overflow: hidden; min-height: 0;
  background: linear-gradient(90deg, #f3dfe8 0%, #edddec 30%, #e2dcee 68%, #e0dcf0 78%, #f1dcec 88%, #efe4e8 95%, #d4f2e0 100%);
`;
const TaskSlot = styled.div<{ $w?: number; $on?: boolean }>`
  width: ${p => p.$w || 57}px; flex: none; display: flex; justify-content: center; padding-top: 11px;
  ${p => (p.$on ? "background: rgba(255,255,255,.35); border-right: 1px solid #c9c6cd; padding-left: 8px;" : "")}
`;
const Tray = styled.div`
  margin-left: auto; display: flex;
`;
const TraySlot = styled.div<{ $w: number; $pt?: number }>`
  width: ${p => p.$w}px; display: flex; justify-content: center; padding-top: ${p => p.$pt ?? 13}px;
`;
const Clock = styled.div`
  font-size: 18px; line-height: 24px; color: #1c1c1c; font-family: "Open Sans", sans-serif;
`;

/* ---------- the Test dialog ---------- */
const Dialog = styled.div`
  position: absolute; left: 236px; top: 215px; width: 1680px; height: 1009px; display: flex; flex-direction: column;
  border: 1px solid #666; background: #fff; box-shadow: 0 0 18px rgba(0,0,0,.45);
`;
const DialogTitle = styled.div`
  height: 44px; flex: none; display: flex; align-items: center; padding: 0 0 3px 11px; font-size: 19px; gap: 5px; background: #fff;
  color: #222;
`;
const DialogControls = styled.div`
  margin-left: auto; display: flex; gap: 54px; padding: 1px 26px 0 0;
`;
const Squiggle = styled.svg`
  position: absolute; left: 551px; top: 6px;
`;
const DialogBody = styled.div`
  flex: 1; display: flex; background: #f1f1f1; border: 1px solid #000; border-top-width: 1.5px; border-right-width: 1.5px; min-height: 0;
`;
const FormColumn = styled.div`
  width: 516px; flex: none; display: flex; flex-direction: column; padding-top: 56px;
`;
const FieldRow = styled.div`
  margin-left: 101px; display: flex; align-items: center; height: 20px;
`;
const FieldLabel = styled.span`
  width: 33px; font-size: 12px; color: #222;
`;
const FieldInput = styled.div`
  width: 166px; height: 20px; background: #fff; border: 1px solid #b9b9b9; font-size: 14px; line-height: 18px; padding-left: 3px;
`;
const Slider = styled.div`
  position: relative; margin: 5px 0 0 101px; width: 196px; height: 10px; display: flex; align-items: center;
`;
const SliderTrack = styled.span`
  flex: 1; height: 2px; background: #adadad;
`;
const SliderKnob = styled.span`
  position: absolute; left: 0; top: 0; width: 10px; height: 10px; border-radius: 50%; background: #cbcbcb;
`;
const FormButton = styled.div<{ $ml: number; $mt: number }>`
  margin: ${p => p.$mt}px 0 0 ${p => p.$ml}px; width: 65px; height: 20px; flex: none; overflow: hidden; white-space: nowrap;
  display: flex; justify-content: center; font-size: 18px; line-height: 18px; color: #4a4a4a; border: 1px solid #808080; border-radius: 2px;
  background: linear-gradient(#ececec, #e8e8e8 50%, #d6d6d6);
`;
const TabWidget = styled.div`
  width: 1002px; flex: none; display: flex; flex-direction: column; padding-top: 48px; height: 765px;
`;
const InnerTabs = styled.div`
  height: 23px; flex: none; display: flex; font-size: 12px; margin-bottom: -1px; position: relative; z-index: 1;
`;
const InnerTab = styled.div<{ $on?: boolean }>`
  height: 23px; line-height: 24px; text-align: center;
  ${p => (p.$on ? "width: 53px; background: #f2f2f2; border: 1px solid #dcdcdc; border-bottom: none;" : "width: 55px;")}
`;
const TabPane = styled.div`
  flex: 1; border: 1px solid #000; background: #f2f2f2; display: flex; flex-direction: column; padding: 41px 1px 0 101px; min-height: 0;
`;
const ViewToolbar = styled.div`
  height: 43px; flex: none; display: flex; align-items: center; background: #f5f5f5; border-top: 1px solid #fff; border-bottom: 2px solid #9a9a9a;
  border-right: 1px solid #bcbcbc;
`;
const ToolSlot = styled.span<{ $ml: number }>`
  margin-left: ${p => p.$ml}px; display: block;
`;
const ToolSep = styled.span<{ $ml: number }>`
  margin-left: ${p => p.$ml}px; width: 1px; height: 34px; background: #d2d3d5;
`;
const Viewport = styled.div`
  position: relative; flex: 1; background: linear-gradient(#bacfe4, #e4e7ec);
`;
const Triad = styled.svg`
  position: absolute; left: 44px; bottom: 38px;
`;

export default function App() {
  return (
    <Page>
      <Global />
      <TitleBar>
        <Quick>
          <Logo s={22} />
          <QuickSlot $l={7}><DocPlus /></QuickSlot>
          <QuickSlot $l={8}><OpenFolder /></QuickSlot>
          <QuickSlot $l={9}><Save /></QuickSlot>
          <QuickSlot $l={9}><Undo /></QuickSlot>
          <QuickSlot $l={9}><Caret /></QuickSlot>
          <QuickSlot $l={10}><Undo faded flip /></QuickSlot>
          <QuickSlot $l={9}><Caret c="#c8cacd" /></QuickSlot>
          <QuickSep />
          <QuickSlot $l={8}><Refresh /></QuickSlot>
          <QuickSlot $l={10}><SmallDrop /></QuickSlot>
        </Quick>
        <ContextTab>开发工具</ContextTab>
        <AppTitle>Simdroid</AppTitle>
        <WinControls><WinMin /><WinRestore /><WinClose /></WinControls>
      </TitleBar>

      <TabRow>
        <FileTab>文件</FileTab>
        <MainTab>主屏幕</MainTab>
        <MainTab>参数定义</MainTab>
        <MainTab>三维建模</MainTab>
        <MainTab>材料属性</MainTab>
        <MainTab>网格剖分</MainTab>
        <MainTab>分析</MainTab>
        <MainTab>结果展示</MainTab>
        <MainTab $active>APP开发器</MainTab>
        <CollapseDot />
      </TabRow>

      <Ribbon>
        <Group $w={64} $pl={4}>
          <CloseButton>
            <BigIcon><CloseFolder /></BigIcon>
            <BigLabel>关闭</BigLabel>
          </CloseButton>
        </Group>
        <Group $w={101}>
          <BigButton $w={100}><BigIcon><NewForm /></BigIcon><BigLabel>新建表单</BigLabel></BigButton>
        </Group>
        <Group $w={122} $pl={10} $soft>
          <SmallColumn $w={110} $pt={5}>
            <Small icon={<FileMenu />} t="文件菜单" />
            <Small icon={<PageMenu />} t="页面菜单" />
          </SmallColumn>
        </Group>
        <Group $w={83} $pl={9}>
          <SmallColumn $w={72} $pt={5}>
            <Small icon={<GroupIc />} t="分组" />
            <Small icon={<CommandIc />} t="命令" />
          </SmallColumn>
        </Group>
        <Group $w={516} $pl={12}>
          <SmallColumn $w={95}>
            <Small icon={<Tag />} t="标签" />
            <Small icon={<InputIc />} t="输入框" />
            <Small icon={<Geometry />} t="几何" />
          </SmallColumn>
          <SmallColumn $w={110}>
            <Small icon={<ButtonIc />} t="按钮" />
            <Small icon={<TextBox />} t="文本框" />
            <Small icon={<FormSet />} t="表单集合" />
          </SmallColumn>
          <SmallColumn $w={96}>
            <Small icon={<PropSet />} t="属性集" />
            <Small icon={<MeshIc />} t="网格" />
            <Small icon={<ResultIc />} t="结果" />
          </SmallColumn>
          <SmallColumn $w={92}>
            <Small icon={<LineIc />} t="分割线" />
            <Small icon={<PieIc />} t="图表" />
            <Small icon={<TableIc />} t="表格" />
          </SmallColumn>
          <SmallColumn $w={100} $pt={5}>
            <Small icon={<MonitorIc />} t="监控曲线" />
            <Small icon={<InputIc />} t="输入控件" />
          </SmallColumn>
        </Group>
        <Group $w={192} $pl={15}>
          <BigButton $w={72}><BigIcon><PreviewForm /></BigIcon><BigLabel>预览表单</BigLabel></BigButton>
          <BigButton $w={73} $ml={19}><BigIcon><CheckList /></BigIcon><BigLabel>测试App</BigLabel></BigButton>
        </Group>
        <Group $w={102} $pl={15}>
          <BigButton $w={73}><BigIcon><ExportApp /></BigIcon><BigLabel>导出App</BigLabel></BigButton>
        </Group>
      </Ribbon>

      <Work>
        <LeftPanel>
          <BrowserTitle>
            组合浏览器
            <PanelActions><PinArrows /><PanelX /></PanelActions>
          </BrowserTitle>
          <BrowserTabs>
            <BrowserTab $on>模型</BrowserTab>
            <BrowserTab>任务</BrowserTab>
          </BrowserTabs>
          <Tree>
            <TreeRow $level={0}><TreeSlot><ToggleCircle open /></TreeSlot><TreeIcon $gap={11}><ConeIc /></TreeIcon>圆锥</TreeRow>
            <TreeRow $level={1}><TreeSlot><ToggleCircle open /></TreeSlot><TreeIcon $gap={11}><AppIc /></TreeIcon>App开发器</TreeRow>
            <TreeRow $level={2}><TreeBranch $top /><TreeIcon $gap={11}><WindowIc /></TreeIcon>主窗口</TreeRow>
            <TreeRow $level={2}><TreeSlot><ToggleCircle open={false} /></TreeSlot><TreeIcon $gap={11}><FormIc /></TreeIcon>表单</TreeRow>
            <TreeRow $level={2}><TreeBranch $top /><TreeIcon $gap={11}><EventIc /></TreeIcon>事件</TreeRow>
            <TreeRow $level={2}><TreeBranch $top $bottom /><TreeIcon $gap={11}><LibraryIc /></TreeIcon>库</TreeRow>
          </Tree>
          <PropHead>
            <PropHeadCell $pl={8}>属性</PropHeadCell>
            <PropHeadCell $pl={12}>值</PropHeadCell>
          </PropHead>
          <PropGroup>表单集合</PropGroup>
          <PropRow><PropGutter /><PropName>类型</PropName><PropValue>选项卡</PropValue></PropRow>
          <PropGroup>基本信息</PropGroup>
          <PropRow><PropGutter /><PropName>标签</PropName><PropValue>表单集合</PropValue></PropRow>
          <PropGroup>位置</PropGroup>
          <PropRow><PropGutter /><PropName>宽</PropName><PropValue>1002</PropValue></PropRow>
          <PropRow $alt><PropGutter /><PropName>高</PropName><PropValue>717</PropValue></PropRow>
          <PropRow><PropGutter /><PropName>X</PropName><PropValue>515</PropValue></PropRow>
          <PropRow $alt><PropGutter $last /><PropName>Y</PropName><PropValue>47</PropValue></PropRow>
          <PanelFill />
          <ViewTabs>
            <ViewTab>视图</ViewTab>
            <ViewTab $on>数据</ViewTab>
          </ViewTabs>
        </LeftPanel>
        <RightPanel>
          <DocTabs>
            <DocTab>表单1</DocTab>
            <DocTab>表单2</DocTab>
            <DocTab $gap={2}>表单3</DocTab>
          </DocTabs>
          <Canvas>
            <Rule $top={0} $h={2} $c="#a8a8a8" $dash />
            <Rule $top={45} $h={2} $c="#004b87" />
            <Rule $top={26} $c="#acacac" />
            <Band />
            <Rule $top={47} $h={2} $c="#004b87" />
            <Rule $top={49} $h={1} $c="#8a8a8a" $dash />
            <Scrollbar>
              <ScrollArrow />
              <ScrollThumb />
              <ScrollArrow $right />
            </Scrollbar>
          </Canvas>
        </RightPanel>
      </Work>

      <StatusBar />

      <Taskbar>
        <TaskSlot $w={46}><Windows /></TaskSlot>
        <TaskSlot $w={64}><SearchIc /></TaskSlot>
        <TaskSlot $w={60.5}><IeIc /></TaskSlot>
        <TaskSlot><Office c1="#0f7a3f" c2="#1d9a58" c3="#4cbd7f" l="X" /></TaskSlot>
        <TaskSlot><PptIc /></TaskSlot>
        <TaskSlot><Office c1="#1a55ac" c2="#2b7cd3" c3="#41a5ee" l="W" /></TaskSlot>
        <TaskSlot><CamTask /></TaskSlot>
        <TaskSlot><GreenIe /></TaskSlot>
        <TaskSlot><WeChat /></TaskSlot>
        <TaskSlot><BlueNet /></TaskSlot>
        <TaskSlot><FolderTask /></TaskSlot>
        <TaskSlot><Swirl /></TaskSlot>
        <TaskSlot $w={50} $on><Logo s={24} /></TaskSlot>
        <Tray>
          <TraySlot $w={48} $pt={18}><Chevron /></TraySlot>
          <TraySlot $w={46}><Battery /></TraySlot>
          <TraySlot $w={52}><Speaker /></TraySlot>
          <TraySlot $w={46} $pt={15}><Wifi /></TraySlot>
          <TraySlot $w={32} $pt={10}><ZhongIme /></TraySlot>
          <TraySlot $w={56} $pt={10}><Sogou /></TraySlot>
          <TraySlot $w={66} $pt={9}><Clock>3:37</Clock></TraySlot>
          <TraySlot $w={64} $pt={11}><Notify /></TraySlot>
        </Tray>
      </Taskbar>

      <Dialog>
        <DialogTitle>
          <Logo />
          Test
          <DialogControls><WinMin /><DlgMax /><WinClose /></DialogControls>
        </DialogTitle>
        <Squiggle width="30" height="40" viewBox="0 0 30 40">
          <path d="M1 1c1 9 6 12 14 18 9 7 14 11 14 19" fill="none" stroke="#0000dc" strokeWidth="2.5" />
        </Squiggle>
        <DialogBody>
          <FormColumn>
            <FieldRow>
              <FieldLabel>半径</FieldLabel>
              <FieldInput>0</FieldInput>
            </FieldRow>
            <Slider><SliderTrack /><SliderKnob /></Slider>
            <FormButton $ml={187} $mt={89}>生成几何</FormButton>
            <FormButton $ml={175} $mt={38}>清除几何</FormButton>
            <FormButton $ml={187} $mt={45}>生成网格</FormButton>
          </FormColumn>
          <TabWidget>
            <InnerTabs>
              <InnerTab $on>表单2</InnerTab>
              <InnerTab>表单3</InnerTab>
            </InnerTabs>
            <TabPane>
              <ViewToolbar>
                <ToolSlot $ml={5}><Camera /></ToolSlot>
                <ToolSlot $ml={15}><Printer /></ToolSlot>
                <ToolSep $ml={14} />
                <ToolSlot $ml={17}><Hexagon /></ToolSlot>
                <ToolSlot $ml={13}><Caret w={10} h={6} /></ToolSlot>
                <ToolSep $ml={15} />
                <ToolSlot $ml={14}><ZoomBox /></ToolSlot>
                <ToolSlot $ml={15}><PanIc /></ToolSlot>
                <ToolSlot $ml={15}><FitIc /></ToolSlot>
                <ToolSlot $ml={18}><AxesIc /></ToolSlot>
                <ToolSlot $ml={1}><Caret w={10} h={6} /></ToolSlot>
              </ViewToolbar>
              <Viewport>
                <Triad width="36" height="40" viewBox="0 0 36 40">
                  <path d="M6 26V6" stroke="#0000e0" strokeWidth="2" />
                  <rect x="4" y="11" width="4" height="4" fill="#0000e0" />
                  <path d="M6 26l13-8" stroke="#10d010" strokeWidth="2" />
                  <path d="M6 26l17 10" stroke="#f00000" strokeWidth="2" />
                  <g fontFamily="Liberation Mono, monospace" fontSize="10">
                    <text x="8" y="7" fill="#0000e0">Z</text>
                    <text x="21" y="20" fill="#10d010">Y</text>
                    <text x="26" y="38" fill="#f00000">X</text>
                  </g>
                </Triad>
              </Viewport>
            </TabPane>
          </TabWidget>
        </DialogBody>
      </Dialog>
    </Page>
  );
}
